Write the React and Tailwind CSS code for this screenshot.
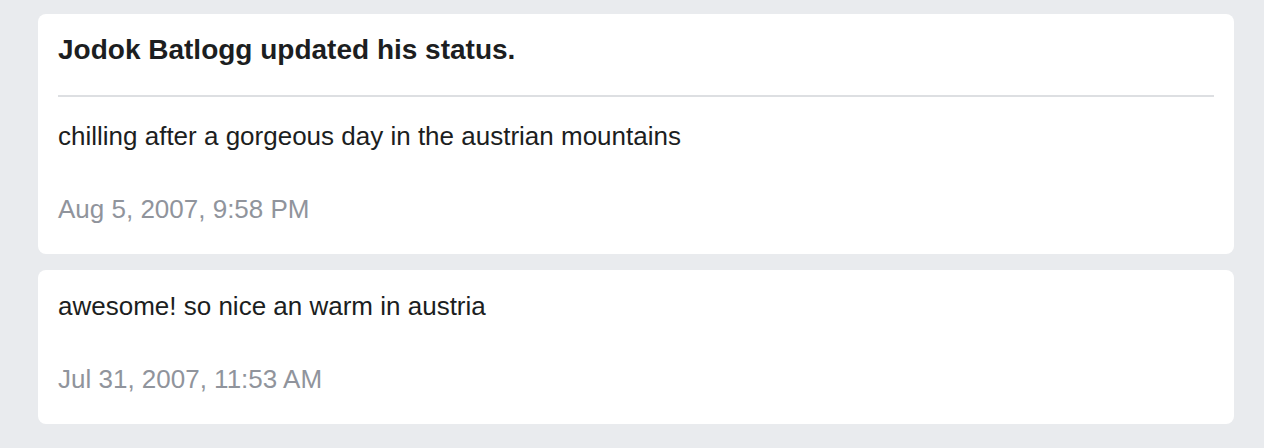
export default function App() {
  const font = { fontFamily: '"Liberation Sans", Arial, Helvetica, sans-serif' };
  return (
    <div className="min-h-screen h-[448px] bg-[#e9ebee] pt-[14px] pl-[38px]" style={font}>
      <div className="w-[1196px] bg-white rounded-[8px] px-[20px] pt-[20px] pb-[29px]">
        <div className="text-[28px] leading-[32px] font-bold text-[#1c1e21]">
          Jodok Batlogg updated his status.
        </div>
        <div className="mt-[29px] h-[2px] bg-[#dddfe2]" />
        <div className="mt-[23px] text-[26px] leading-[32px] text-[#1c1e21]">
          chilling after a gorgeous day in the austrian mountains
        </div>
        <div className="mt-[41px] text-[26px] leading-[32px] text-[#90949c]">
          Aug 5, 2007, 9:58 PM
        </div>
      </div>
      <div className="mt-[16px] w-[1196px] bg-white rounded-[8px] px-[20px] pt-[20px] pb-[29px]">
        <div className="text-[26px] leading-[32px] text-[#1c1e21]">
          awesome! so nice an warm in austria
        </div>
        <div className="mt-[41px] text-[26px] leading-[32px] text-[#90949c]">
          Jul 31, 2007, 11:53 AM
        </div>
      </div>
    </div>
  );
}
